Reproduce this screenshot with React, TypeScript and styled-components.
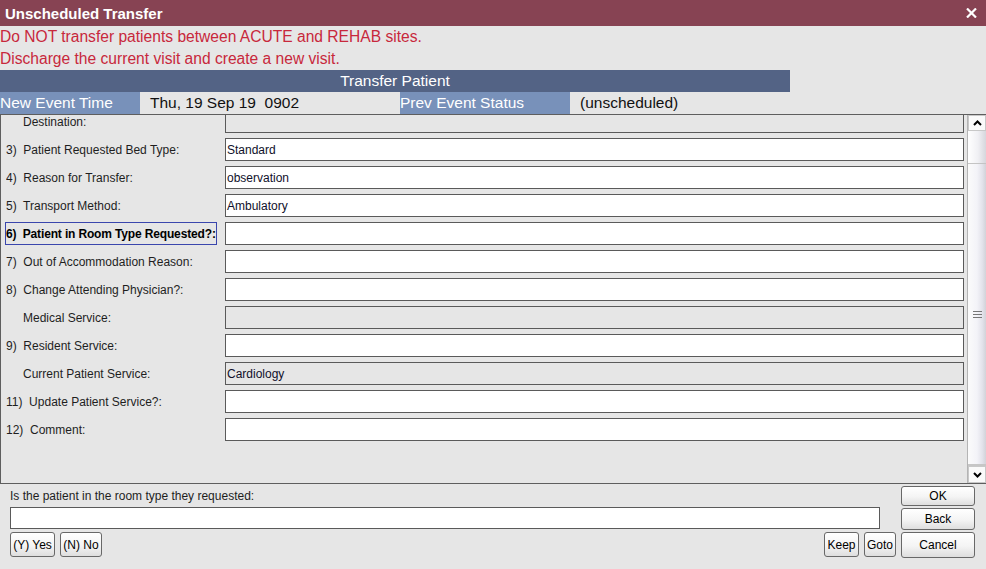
import React, { useLayoutEffect, useRef } from 'react';
import styled, { createGlobalStyle } from 'styled-components';

const GlobalStyle = createGlobalStyle`
    html, body {
        margin: 0;
        padding: 0;
        background: #e6e6e6;
    }
    body {
        font-family: "Liberation Sans", Arial, sans-serif;
        color: #1e1e1e;
    }
`;

const Window = styled.div`
    width: 986px;
    height: 569px;
    display: flex;
    flex-direction: column;
    background: #e6e6e6;
    overflow: hidden;
`;

const TitleBar = styled.div`
    height: 26px;
    background: #874353;
    display: flex;
    align-items: center;
    justify-content: space-between;
    padding: 0 9px 0 5px;
    flex-shrink: 0;
`;

const Title = styled.div`
    color: #fff;
    font-weight: bold;
    font-size: 15px;
`;

const Warning = styled.div`
    color: #c8283c;
    font-size: 15.6px;
    line-height: 22px;
    height: 22px;
    white-space: nowrap;
`;

const SectionBar = styled.div`
    width: 790px;
    height: 22px;
    line-height: 22px;
    background: #536385;
    color: #fff;
    font-size: 15.5px;
    text-align: center;
    flex-shrink: 0;
`;

const InfoRow = styled.div`
    display: flex;
    height: 22px;
    flex-shrink: 0;
`;

const InfoCell = styled.div<{ $w?: number; $label?: boolean }>`
    ${({ $w }) => ($w ? `width: ${$w}px;` : 'flex: 1;')}
    box-sizing: border-box;
    background: ${({ $label }) => ($label ? '#7891ba' : 'transparent')};
    color: ${({ $label }) => ($label ? '#fff' : '#111')};
    padding-left: ${({ $label }) => ($label ? 0 : 10)}px;
    font-size: 15.5px;
    line-height: 22px;
    white-space: pre;
`;

const Panel = styled.div`
    height: 370px;
    box-sizing: border-box;
    border: 1px solid #5e5e5e;
    border-right: none;
    display: flex;
    flex-shrink: 0;
`;

const ScrollArea = styled.div`
    flex: 1;
    overflow: hidden;
`;

const FieldList = styled.div`
    display: grid;
    row-gap: 5px;
    padding-right: 3px;
    padding-bottom: 60px;
`;

const FieldRow = styled.div`
    display: grid;
    grid-template-columns: 224px 1fr;
    height: 23px;
`;

const Label = styled.div<{ $sub?: boolean; $focused?: boolean }>`
    width: 212px;
    margin-left: 4px;
    box-sizing: border-box;
    border: 1px solid ${({ $focused }) => ($focused ? '#3a46ad' : 'transparent')};
    padding-left: ${({ $sub }) => ($sub ? 17 : 0)}px;
    display: flex;
    align-items: center;
    font-size: 12px;
    font-weight: ${({ $focused }) => ($focused ? 'bold' : 'normal')};
    letter-spacing: ${({ $focused }) => ($focused ? '-0.15px' : '0')};
    color: ${({ $focused }) => ($focused ? '#000' : '#1e1e1e')};
    white-space: pre;
    overflow: hidden;
`;

const Field = styled.div<{ $disabled?: boolean }>`
    box-sizing: border-box;
    height: 23px;
    border: 1px solid #5a5a5a;
    background: ${({ $disabled }) => ($disabled ? '#e6e6e6' : '#fff')};
    padding-left: 1px;
    display: flex;
    align-items: center;
    font-size: 12px;
    color: #10102a;
`;

const ScrollBar = styled.div`
    width: 18px;
    display: flex;
    flex-direction: column;
    border-left: 1px solid #b4b4b4;
    background: #f2f2f6;
`;

const ArrowButton = styled.div<{ $h: number }>`
    height: ${({ $h }) => $h}px;
    display: flex;
    align-items: center;
    justify-content: center;
    background: #fafafa;
    border: 1px solid #c8c8c8;
    box-sizing: border-box;
    flex-shrink: 0;
`;

const Track = styled.div`
    height: 32px;
    flex-shrink: 0;
    background: linear-gradient(to right, #ffffff 0%, #f0f0f4 55%, #d6d6dc 100%);
    border-bottom: 1px solid #c4c4c4;
`;

const Thumb = styled.div`
    flex: 1;
    display: flex;
    align-items: center;
    justify-content: center;
    background: linear-gradient(to right, #fbfbfb 0%, #f3f3f8 50%, #e2e2ea 80%, #d2d2d8 100%);
    border-bottom: 2px solid #c6c6c6;
`;

const Grip = styled.div`
    width: 9px;
    height: 7px;
    border-top: 1px solid #777;
    border-bottom: 1px solid #777;
    box-sizing: border-box;
    display: flex;
    align-items: center;
    &::after {
        content: '';
        display: block;
        width: 100%;
        height: 1px;
        background: #777;
    }
`;

const Footer = styled.div`
    flex: 1;
    display: grid;
    grid-template-columns: 1fr 74px;
    grid-template-rows: 20px 22px 26px;
    column-gap: 5px;
    row-gap: 2px;
    padding: 1px 11px 0 10px;
`;

const Prompt = styled.div`
    font-size: 12px;
    display: flex;
    align-items: center;
    padding-top: 2px;
`;

const AnswerInput = styled.div`
    margin-right: 16px;
    box-sizing: border-box;
    border: 1px solid #5a5a5a;
    background: #fff;
`;

const ButtonRow = styled.div`
    display: flex;
    gap: 5px;
    margin-top: 1px;
`;

const Spacer = styled.div`
    flex: 1;
`;

const Button = styled.button<{ $w?: number }>`
    ${({ $w }) => ($w ? `width: ${$w}px;` : 'width: 100%;')}
    height: 100%;
    margin: 0;
    padding: 0;
    box-sizing: border-box;
    border: 1px solid #686868;
    border-radius: 3px;
    background: linear-gradient(to bottom, #ffffff 0%, #f4f4f4 55%, #dedede 100%);
    font-family: "Liberation Sans", Arial, sans-serif;
    font-size: 12px;
    color: #000;
    white-space: nowrap;
`;

const RightButton = styled(Button)`
    margin-top: 1px;
`;

type FieldDef = {
    label: string;
    value?: string;
    sub?: boolean;
    disabled?: boolean;
    focused?: boolean;
};

const fields: FieldDef[] = [
    { label: 'Destination:', sub: true, disabled: true },
    { label: '3)  Patient Requested Bed Type:', value: 'Standard' },
    { label: '4)  Reason for Transfer:', value: 'observation' },
    { label: '5)  Transport Method:', value: 'Ambulatory' },
    { label: '6)  Patient in Room Type Requested?:', focused: true },
    { label: '7)  Out of Accommodation Reason:' },
    { label: '8)  Change Attending Physician?:' },
    { label: 'Medical Service:', sub: true, disabled: true },
    { label: '9)  Resident Service:' },
    { label: 'Current Patient Service:', value: 'Cardiology', sub: true, disabled: true },
    { label: '11)  Update Patient Service?:' },
    { label: '12)  Comment:' },
];

const Caret: React.FC<{ down?: boolean }> = ({ down }) => (
    <svg width="9" height="6" viewBox="0 0 9 6">
        <path
            d={down ? 'M1 1 L4.5 4.5 L8 1' : 'M1 5 L4.5 1.5 L8 5'}
            fill="none"
            stroke="#000"
            strokeWidth="2"
        />
    </svg>
);

export default function App() {
    const scrollRef = useRef<HTMLDivElement>(null);

    // the form is scrolled down a few pixels in the screenshot
    useLayoutEffect(() => {
        if (scrollRef.current) scrollRef.current.scrollTop = 5;
    }, []);

    return (
        <>
            <GlobalStyle />
            <Window>
                <TitleBar>
                    <Title>Unscheduled Transfer</Title>
                    <svg width="11" height="10" viewBox="0 0 11 10">
                        <path d="M1 0.5 L10 9.5 M10 0.5 L1 9.5" stroke="#fff" strokeWidth="2.2" />
                    </svg>
                </TitleBar>
                <Warning>Do NOT transfer patients between ACUTE and REHAB sites.</Warning>
                <Warning>Discharge the current visit and create a new visit.</Warning>
                <SectionBar>Transfer Patient</SectionBar>
                <InfoRow>
                    <InfoCell $w={140} $label>New Event Time</InfoCell>
                    <InfoCell $w={260}>Thu, 19 Sep 19  0902</InfoCell>
                    <InfoCell $w={170} $label>Prev Event Status</InfoCell>
                    <InfoCell>(unscheduled)</InfoCell>
                </InfoRow>
                <Panel>
                    <ScrollArea ref={scrollRef}>
                        <FieldList>
                            {fields.map((f, i) => (
                                <FieldRow key={i}>
                                    <Label $sub={f.sub} $focused={f.focused}>{f.label}</Label>
                                    <Field $disabled={f.disabled}>{f.value}</Field>
                                </FieldRow>
                            ))}
                        </FieldList>
                    </ScrollArea>
                    <ScrollBar>
                        <ArrowButton $h={16}><Caret /></ArrowButton>
                        <Track />
                        <Thumb><Grip /></Thumb>
                        <ArrowButton $h={17}><Caret down /></ArrowButton>
                    </ScrollBar>
                </Panel>
                <Footer>
                    <Prompt>Is the patient in the room type they requested:</Prompt>
                    <RightButton>OK</RightButton>
                    <AnswerInput />
                    <RightButton>Back</RightButton>
                    <ButtonRow>
                        <Button $w={45}>(Y) Yes</Button>
                        <Button $w={42}>(N) No</Button>
                        <Spacer />
                        <Button $w={35}>Keep</Button>
                        <Button $w={32}>Goto</Button>
                    </ButtonRow>
                    <RightButton>Cancel</RightButton>
                </Footer>
            </Window>
        </>
    );
}
